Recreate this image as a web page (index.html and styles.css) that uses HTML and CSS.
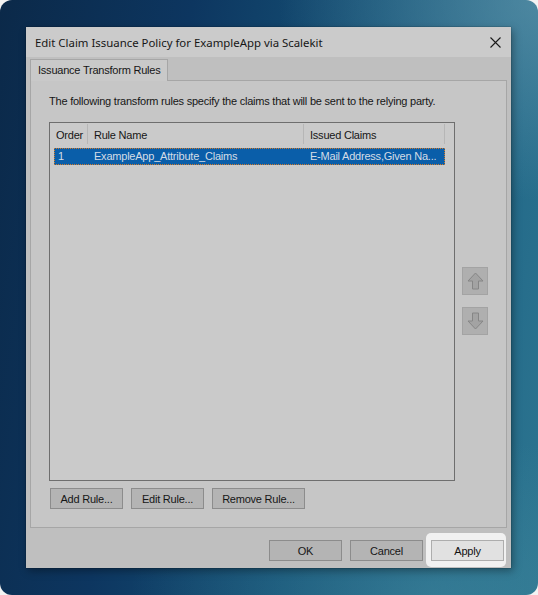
FILE: index.html
```html
<!DOCTYPE html>
<html>
<head>
<meta charset="utf-8">
<link rel="stylesheet" href="styles.css">
</head>
<body>
<div class="desktop">
  <div class="window">
    <div class="titlebar">
      <span class="title">Edit Claim Issuance Policy for ExampleApp via Scalekit</span>
      <svg class="close" width="11" height="11" viewBox="0 0 11 11"><path d="M0.5 0.5 L10.5 10.5 M10.5 0.5 L0.5 10.5" stroke="#1a1a1a" stroke-width="1.1" fill="none"/></svg>
    </div>
    <div class="content">
      <div class="tabs"><div class="tab">Issuance Transform Rules</div></div>
      <div class="panel">
        <p class="desc">The following transform rules specify the claims that will be sent to the relying party.</p>
        <div class="listrow">
          <div class="list">
            <div class="header">
              <div class="col c1">Order</div>
              <div class="col c2">Rule Name</div>
              <div class="col c3">Issued Claims</div>
            </div>
            <div class="row selected">
              <div class="cell c1">1</div>
              <div class="cell c2">ExampleApp_Attribute_Claims</div>
              <div class="cell c3">E-Mail Address,Given Na...</div>
            </div>
          </div>
          <div class="arrows">
            <div class="arrowbtn">
              <svg width="17" height="18" viewBox="0 0 17 18"><path d="M8.5 1 L16 9 L11.5 9 L11.5 17 L5.5 17 L5.5 9 L1 9 Z" fill="#a3a3a3" stroke="#868686" stroke-width="1"/></svg>
            </div>
            <div class="arrowbtn">
              <svg width="17" height="18" viewBox="0 0 17 18"><path d="M8.5 17 L16 9 L11.5 9 L11.5 1 L5.5 1 L5.5 9 L1 9 Z" fill="#a3a3a3" stroke="#868686" stroke-width="1"/></svg>
            </div>
          </div>
        </div>
        <div class="rulebtns">
          <button class="btn">Add Rule...</button>
          <button class="btn">Edit Rule...</button>
          <button class="btn wide">Remove Rule...</button>
        </div>
      </div>
      <div class="footer">
        <button class="btn">OK</button>
        <button class="btn">Cancel</button>
        <div class="hl"><button class="btn apply">Apply</button></div>
      </div>
    </div>
  </div>
</div>
</body>
</html>
```
FILE: styles.css
```css
html, body {
  margin: 0;
  padding: 0;
  background: #f3f3f3;
}
.desktop {
  width: 538px;
  height: 595px;
  box-sizing: border-box;
  border-radius: 12px;
  overflow: hidden;
  padding: 27px 0 0 26px;
  background:
    radial-gradient(ellipse 260px 200px at 100% 0%, rgba(110,160,180,0.55), rgba(110,160,180,0) 100%),
    radial-gradient(ellipse 300px 160px at 80% 100%, rgba(70,140,160,0.45), rgba(70,140,160,0) 100%),
    linear-gradient(100deg, #0b2949 0%, #0d3660 30%, #165478 60%, #256b8a 85%, #2c7590 100%);
  font-family: "Liberation Sans", Arial, sans-serif;
  font-size: 11px;
  letter-spacing: -0.22px;
  color: #161616;
}
.window {
  width: 485px;
  height: 541px;
  background: #bfbfbf;
  box-shadow: 0 0 1px rgba(0,0,0,0.6), 2px 3px 8px rgba(0,0,0,0.35);
  display: flex;
  flex-direction: column;
}
.titlebar {
  height: 30px;
  flex: none;
  background: #cbcbcb;
  display: flex;
  align-items: center;
  justify-content: space-between;
  padding: 0 10px 0 9px;
  font-family: "Noto Sans", "Open Sans", sans-serif;
  font-size: 11.4px;
  letter-spacing: 0;
}
.close { display: block; margin-top: 1px; }
.content {
  flex: 1;
  display: flex;
  flex-direction: column;
  padding: 2px 4px 0 4px;
}
.tabs { display: flex; height: 22px; margin-bottom: -1px; }
.tab {
  width: 138px;
  box-sizing: border-box;
  border: 1px solid #a6a6a6;
  border-bottom: none;
  background: #c9c9c9;
  line-height: 20px;
  padding-left: 7px;
  white-space: nowrap;
  position: relative;
  z-index: 1;
}
.panel {
  height: 448px;
  flex: none;
  box-sizing: border-box;
  border: 1px solid #a6a6a6;
  background: #c6c6c6;
  padding: 0 0 0 18px;
  display: flex;
  flex-direction: column;
}
.desc {
  margin: 13px 0 0 0;
  line-height: 15px;
  height: 15px;
  white-space: nowrap;
}
.listrow {
  display: flex;
  margin-top: 13px;
  gap: 7px;
}
.list {
  width: 406px;
  height: 359px;
  box-sizing: border-box;
  border: 1px solid #6e6e6e;
  background: #cacaca;
}
.header {
  display: flex;
  height: 22px;
}
.col {
  box-sizing: border-box;
  padding-left: 6px;
  border-right: 1px solid #b6b6b6;
  margin: 1px 0;
  line-height: 22px;
  white-space: nowrap;
}
.c1 { width: 38px; }
.c2 { width: 216px; }
.c3 { width: 141px; }
.row {
  display: flex;
  height: 17px;
  margin: 3px 0 0 4px;
  width: 391px;
  box-sizing: border-box;
}
.row.selected {
  background: #0a5ea9;
  color: #d4dce6;
  outline: 1px dotted #d07a2a;
  outline-offset: -1px;
}
.cell {
  line-height: 17px;
  white-space: nowrap;
  overflow: hidden;
  box-sizing: border-box;
}
.row .c1 { width: 34px; padding-left: 4px; }
.row .c2 { width: 216px; padding-left: 6px; }
.row .c3 { width: 141px; padding-left: 6px; }
.arrows {
  display: flex;
  flex-direction: column;
  gap: 12px;
  margin-top: 145px;
}
.arrowbtn {
  width: 26px;
  height: 28px;
  box-sizing: border-box;
  background: #afafaf;
  border: 1px solid #a3a3a3;
  display: flex;
  align-items: center;
  justify-content: center;
}
.rulebtns {
  display: flex;
  gap: 8px;
  margin-top: 7px;
  padding-left: 1px;
}
.btn {
  width: 73px;
  height: 21px;
  box-sizing: border-box;
  background: #b4b4b4;
  border: 1px solid #8c8c8c;
  font-family: "Liberation Sans", Arial, sans-serif;
  font-size: 11px;
  letter-spacing: -0.22px;
  color: #161616;
  padding: 0;
  margin: 0;
  line-height: 18px;
}
.btn.wide { width: 93px; }
.footer {
  display: flex;
  justify-content: flex-end;
  gap: 8px;
  padding: 12px 3px 0 0;
}
.hl {
  position: relative;
}
.hl::before {
  content: "";
  position: absolute;
  left: -5px;
  right: -2px;
  top: -7px;
  bottom: -6px;
  background: #f1f1f1;
  border-radius: 5px;
}
.btn.apply {
  position: relative;
  background: #e1e1e1;
  border-color: #adadad;
  color: #111;
}
```
